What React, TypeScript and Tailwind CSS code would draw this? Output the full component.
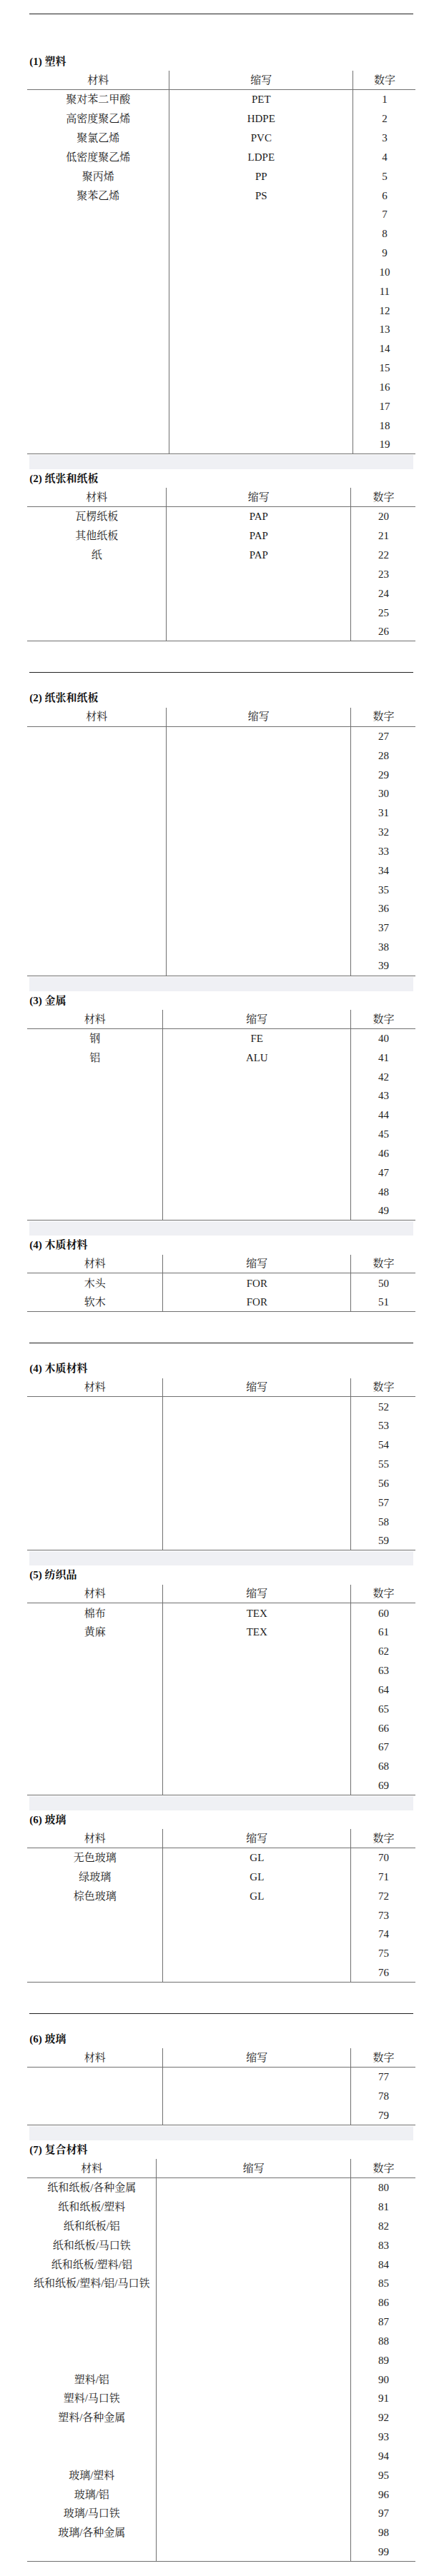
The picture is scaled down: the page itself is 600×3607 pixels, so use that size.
import React from "react";

type Row = [string, string, string];

type Sec = {
  title: string;
  cols: string;
  rows: Row[];
};

const nums = (from: number, to: number): Row[] => {
  const r: Row[] = [];
  for (let i = from; i <= to; i++) r.push(["", "", String(i)]);
  return r;
};

const C1 = "grid-cols-[199px_257px_1fr]";
const C2 = "grid-cols-[195px_258px_1fr]";
const C3 = "grid-cols-[190px_263px_1fr]";
const C7 = "grid-cols-[181px_272px_1fr]";

const s1: Sec = {
  title: "(1) 塑料",
  cols: C1,
  rows: [
    ["聚对苯二甲酸", "PET", "1"],
    ["高密度聚乙烯", "HDPE", "2"],
    ["聚氯乙烯", "PVC", "3"],
    ["低密度聚乙烯", "LDPE", "4"],
    ["聚丙烯", "PP", "5"],
    ["聚苯乙烯", "PS", "6"],
    ...nums(7, 19),
  ],
};

const s2: Sec = {
  title: "(2) 纸张和纸板",
  cols: C2,
  rows: [
    ["瓦楞纸板", "PAP", "20"],
    ["其他纸板", "PAP", "21"],
    ["纸", "PAP", "22"],
    ...nums(23, 26),
  ],
};

const s2b: Sec = { title: "(2) 纸张和纸板", cols: C2, rows: nums(27, 39) };

const s3: Sec = {
  title: "(3) 金属",
  cols: C3,
  rows: [["钢", "FE", "40"], ["铝", "ALU", "41"], ...nums(42, 49)],
};

const s4: Sec = {
  title: "(4) 木质材料",
  cols: C3,
  rows: [
    ["木头", "FOR", "50"],
    ["软木", "FOR", "51"],
  ],
};

const s4b: Sec = { title: "(4) 木质材料", cols: C3, rows: nums(52, 59) };

const s5: Sec = {
  title: "(5) 纺织品",
  cols: C3,
  rows: [["棉布", "TEX", "60"], ["黄麻", "TEX", "61"], ...nums(62, 69)],
};

const s6: Sec = {
  title: "(6) 玻璃",
  cols: C3,
  rows: [
    ["无色玻璃", "GL", "70"],
    ["绿玻璃", "GL", "71"],
    ["棕色玻璃", "GL", "72"],
    ...nums(73, 76),
  ],
};

const s6b: Sec = { title: "(6) 玻璃", cols: C3, rows: nums(77, 79) };

const s7: Sec = {
  title: "(7) 复合材料",
  cols: C7,
  rows: [
    ["纸和纸板/各种金属", "", "80"],
    ["纸和纸板/塑料", "", "81"],
    ["纸和纸板/铝", "", "82"],
    ["纸和纸板/马口铁", "", "83"],
    ["纸和纸板/塑料/铝", "", "84"],
    ["纸和纸板/塑料/铝/马口铁", "", "85"],
    ["", "", "86"],
    ["", "", "87"],
    ["", "", "88"],
    ["", "", "89"],
    ["塑料/铝", "", "90"],
    ["塑料/马口铁", "", "91"],
    ["塑料/各种金属", "", "92"],
    ["", "", "93"],
    ["", "", "94"],
    ["玻璃/塑料", "", "95"],
    ["玻璃/铝", "", "96"],
    ["玻璃/马口铁", "", "97"],
    ["玻璃/各种金属", "", "98"],
    ["", "", "99"],
  ],
};

function TableRow({ cells, cols, last, head }: { cells: Row; cols: string; last?: boolean; head?: boolean }) {
  return (
    <div
      className={`grid ${cols} h-[26.85px] ${head || last ? "border-b border-[#707070]" : ""}`}
    >
      <div className="flex items-center justify-center border-r border-[#707070] whitespace-nowrap">{cells[0]}</div>
      <div className="flex items-center justify-center border-r border-[#707070] whitespace-nowrap">{cells[1]}</div>
      <div className="flex items-center justify-center whitespace-nowrap">{cells[2]}</div>
    </div>
  );
}

function Section({ s }: { s: Sec }) {
  return (
    <section>
      <h3 className="flex h-[26.3px] items-center font-bold text-[15px] text-[#111]">{s.title}</h3>
      <div className="-ml-[3px] w-[543.2px]">
        <TableRow cells={["材料", "缩写", "数字"]} cols={s.cols} head />
        {s.rows.map((r, i) => (
          <TableRow key={i} cells={r} cols={s.cols} last={i === s.rows.length - 1} />
        ))}
      </div>
    </section>
  );
}

function Band() {
  return <div className="mt-px h-[20px] bg-[#eff0f4]" />;
}

function PageBreak() {
  return (
    <div className="pt-[43px] pb-[22.3px]">
      <div className="h-px bg-[#222]" />
    </div>
  );
}

export default function App() {
  return (
    <div className="w-[600px] bg-white pt-[19px] pb-[20px] font-['Liberation_Serif','Noto_Serif_CJK_SC','Noto_Sans_CJK_SC',serif] text-[15px] text-[#1c1c1c]">
      <div className="ml-[41.3px] w-[536.4px]">
        <div className="h-px bg-[#222]" />
        <div className="h-[53px]" />
        <Section s={s1} />
        <Band />
        <Section s={s2} />
        <PageBreak />
        <Section s={s2b} />
        <Band />
        <Section s={s3} />
        <Band />
        <Section s={s4} />
        <PageBreak />
        <Section s={s4b} />
        <Band />
        <Section s={s5} />
        <Band />
        <Section s={s6} />
        <PageBreak />
        <Section s={s6b} />
        <Band />
        <Section s={s7} />
      </div>
    </div>
  );
}
